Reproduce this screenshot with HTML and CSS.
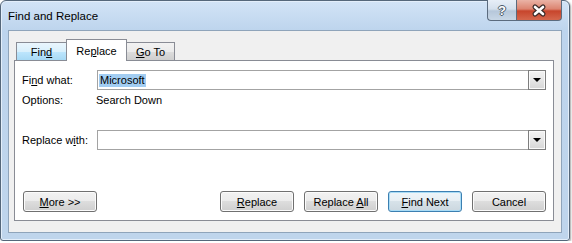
FILE: index.html
```html
<!DOCTYPE html>
<html lang="en">
<head>
    <meta charset="UTF-8">
    <title>Find and Replace</title>
    <link rel="stylesheet" href="styles.css">
</head>
<body>
    <div class="window">
        <div class="titlebar">
            <span class="title">Find and Replace</span>
            <div class="caption">
                <div class="cap-btn help">?</div>
                <div class="cap-btn close">
                    <svg width="44" height="19" viewBox="0 0 44 19">
                        <path d="M18 6 L26 13 M26 6 L18 13" stroke="#3b2a28" stroke-width="5" stroke-linecap="round"/>
                        <path d="M18 6 L26 13 M26 6 L18 13" stroke="#fff" stroke-width="2.6" stroke-linecap="round"/>
                    </svg>
                </div>
            </div>
        </div>
        <div class="client">
            <ul class="tabs">
                <li class="tab hover">Fin<u>d</u></li>
                <li class="tab active">Re<u>p</u>lace</li>
                <li class="tab goto"><u>G</u>o To</li>
            </ul>
            <div class="panel">
                <div class="row find-row">
                    <span class="label">Fi<u>n</u>d what:</span>
                    <div class="combo">
                        <span class="combo-text"><span class="selected">Microsoft</span></span>
                        <span class="drop"><span class="arrow"></span></span>
                    </div>
                </div>
                <div class="row options-row">
                    <span class="label">Options:</span>
                    <span class="value">Search Down</span>
                </div>
                <div class="row replace-row">
                    <span class="label">Replace w<u>i</u>th:</span>
                    <div class="combo">
                        <span class="combo-text"></span>
                        <span class="drop"><span class="arrow"></span></span>
                    </div>
                </div>
                <div class="buttons">
                    <button class="btn more"><u>M</u>ore &gt;&gt;</button>
                    <div class="actions">
                        <button class="btn"><u>R</u>eplace</button>
                        <button class="btn">Replace <u>A</u>ll</button>
                        <button class="btn default"><u>F</u>ind Next</button>
                        <button class="btn">Cancel</button>
                    </div>
                </div>
            </div>
        </div>
    </div>
</body>
</html>
```

FILE: styles.css
```css
*{
    margin: 0;
    padding: 0;
    list-style: none;
    box-sizing: border-box;
}
body{
    background-color: #fff;
    font-family: "Liberation Sans", Arial, sans-serif;
    font-size: 11px;
    color: #000;
}
.window{
    width: 570px;
    height: 241px;
    border: 1px solid #55677a;
    border-radius: 6px 6px 3px 3px;
    background: linear-gradient(180deg, #d2e3f6 0, #bdd4ed 30px, #bfd5ec 100%);
    box-shadow: inset 0 0 0 1px #e3eefa, 1px 1px 2px rgba(0,0,0,0.35);
    padding: 0 7px 7px 7px;
    display: flex;
    flex-direction: column;
}
.titlebar{
    height: 29px;
    display: flex;
}
.title{
    flex: 1;
    font-size: 11.5px;
    line-height: 14px;
    padding-top: 8px;
    color: #000;
}
.caption{
    display: flex;
    height: 21px;
    margin-top: -1px;
}
.cap-btn{
    height: 21px;
    border: 1px solid #5b6b7e;
    border-top: none;
    display: flex;
    align-items: center;
    justify-content: center;
}
.help{
    width: 29px;
    border-right: none;
    border-radius: 0 0 0 4px;
    background: linear-gradient(180deg, #e7eef7 0, #d4e0ed 45%, #b6c7da 55%, #c8d7e6 100%);
    color: #fff;
    font-weight: bold;
    font-size: 13px;
    text-shadow: -1px 0 #4b5a6a, 1px 0 #4b5a6a, 0 -1px #4b5a6a, 0 1px #4b5a6a;
}
.close{
    width: 46px;
    border-radius: 0 0 4px 0;
    background: linear-gradient(180deg, #eab3a6 0, #dc8470 45%, #c7452c 55%, #d5674d 100%);
}
.client{
    flex: 1;
    background-color: #f0f0f0;
    border: 1px solid #8fa4ba;
    padding: 8px 7px 11px 5px;
    display: flex;
    flex-direction: column;
}
.tabs{
    display: flex;
    align-items: flex-end;
    padding-left: 2px;
}
.tab{
    height: 18px;
    border: 1px solid #898c95;
    border-bottom: none;
    text-align: center;
    line-height: 13px;
    padding-top: 3px;
    background: linear-gradient(180deg, #f2f2f2 0, #ebebeb 50%, #dddddd 50%, #cfcfcf 100%);
}
.tab.hover{
    width: 51px;
    background: linear-gradient(180deg, #eaf6fd 0, #d9f0fc 50%, #bee6fd 50%, #a7d9f5 100%);
}
.tab.active{
    width: 61px;
    height: 22px;
    margin-left: -1px;
    margin-bottom: -1px;
    padding-top: 5px;
    background: #fff;
    position: relative;
    z-index: 1;
}
.tab.goto{
    width: 49px;
    margin-left: -1px;
}
.panel{
    flex: 1;
    background-color: #fff;
    border: 1px solid #898c95;
    padding: 0 7px 8px 7px;
    display: flex;
    flex-direction: column;
}
.row{
    display: flex;
    align-items: center;
}
.label{
    width: 75px;
    flex-shrink: 0;
}
.find-row{
    margin-top: 9px;
}
.options-row{
    margin-top: 2px;
    height: 16px;
}
.options-row .value{
    margin-left: -1px;
}
.replace-row{
    margin-top: 22px;
}
.combo{
    flex: 1;
    height: 20px;
    border: 1px solid #a3a3a3;
    display: flex;
    background: #fff;
}
.combo-text{
    flex: 1;
    display: flex;
    align-items: center;
    padding-left: 1px;
}
.selected{
    background-color: #a2cdf2;
    line-height: 13px;
    padding: 0 1px;
}
.drop{
    width: 18px;
    margin: -1px -1px -1px 0;
    border: 1px solid #7e7e7e;
    box-shadow: inset 0 0 0 1px #fafafa;
    background: linear-gradient(180deg, #f3f3f3 0, #e6e6e6 50%, #d6d6d6 100%);
    display: flex;
    align-items: center;
    justify-content: center;
}
.arrow{
    width: 0;
    height: 0;
    border-left: 4px solid transparent;
    border-right: 4px solid transparent;
    border-top: 4px solid #000;
}
.buttons{
    margin-top: auto;
    display: flex;
    justify-content: space-between;
}
.actions{
    display: flex;
    gap: 10px;
}
.btn{
    width: 74px;
    height: 21px;
    border: 1px solid #707070;
    border-radius: 3px;
    background: linear-gradient(180deg, #f2f2f2 0, #ebebeb 50%, #dddddd 50%, #cfcfcf 100%);
    box-shadow: inset 0 0 0 1px #fbfbfb;
    font-family: "Liberation Sans", Arial, sans-serif;
    font-size: 11px;
    color: #000;
    padding: 0;
}
.btn.more{
    margin-left: 1px;
}
.btn.default{
    border-color: #3c7fb1;
    box-shadow: inset 0 0 0 1px #a9dcf6;
    background: linear-gradient(180deg, #eef5f9 0, #e6eef3 50%, #d7e2e9 50%, #cbd7df 100%);
}
```
